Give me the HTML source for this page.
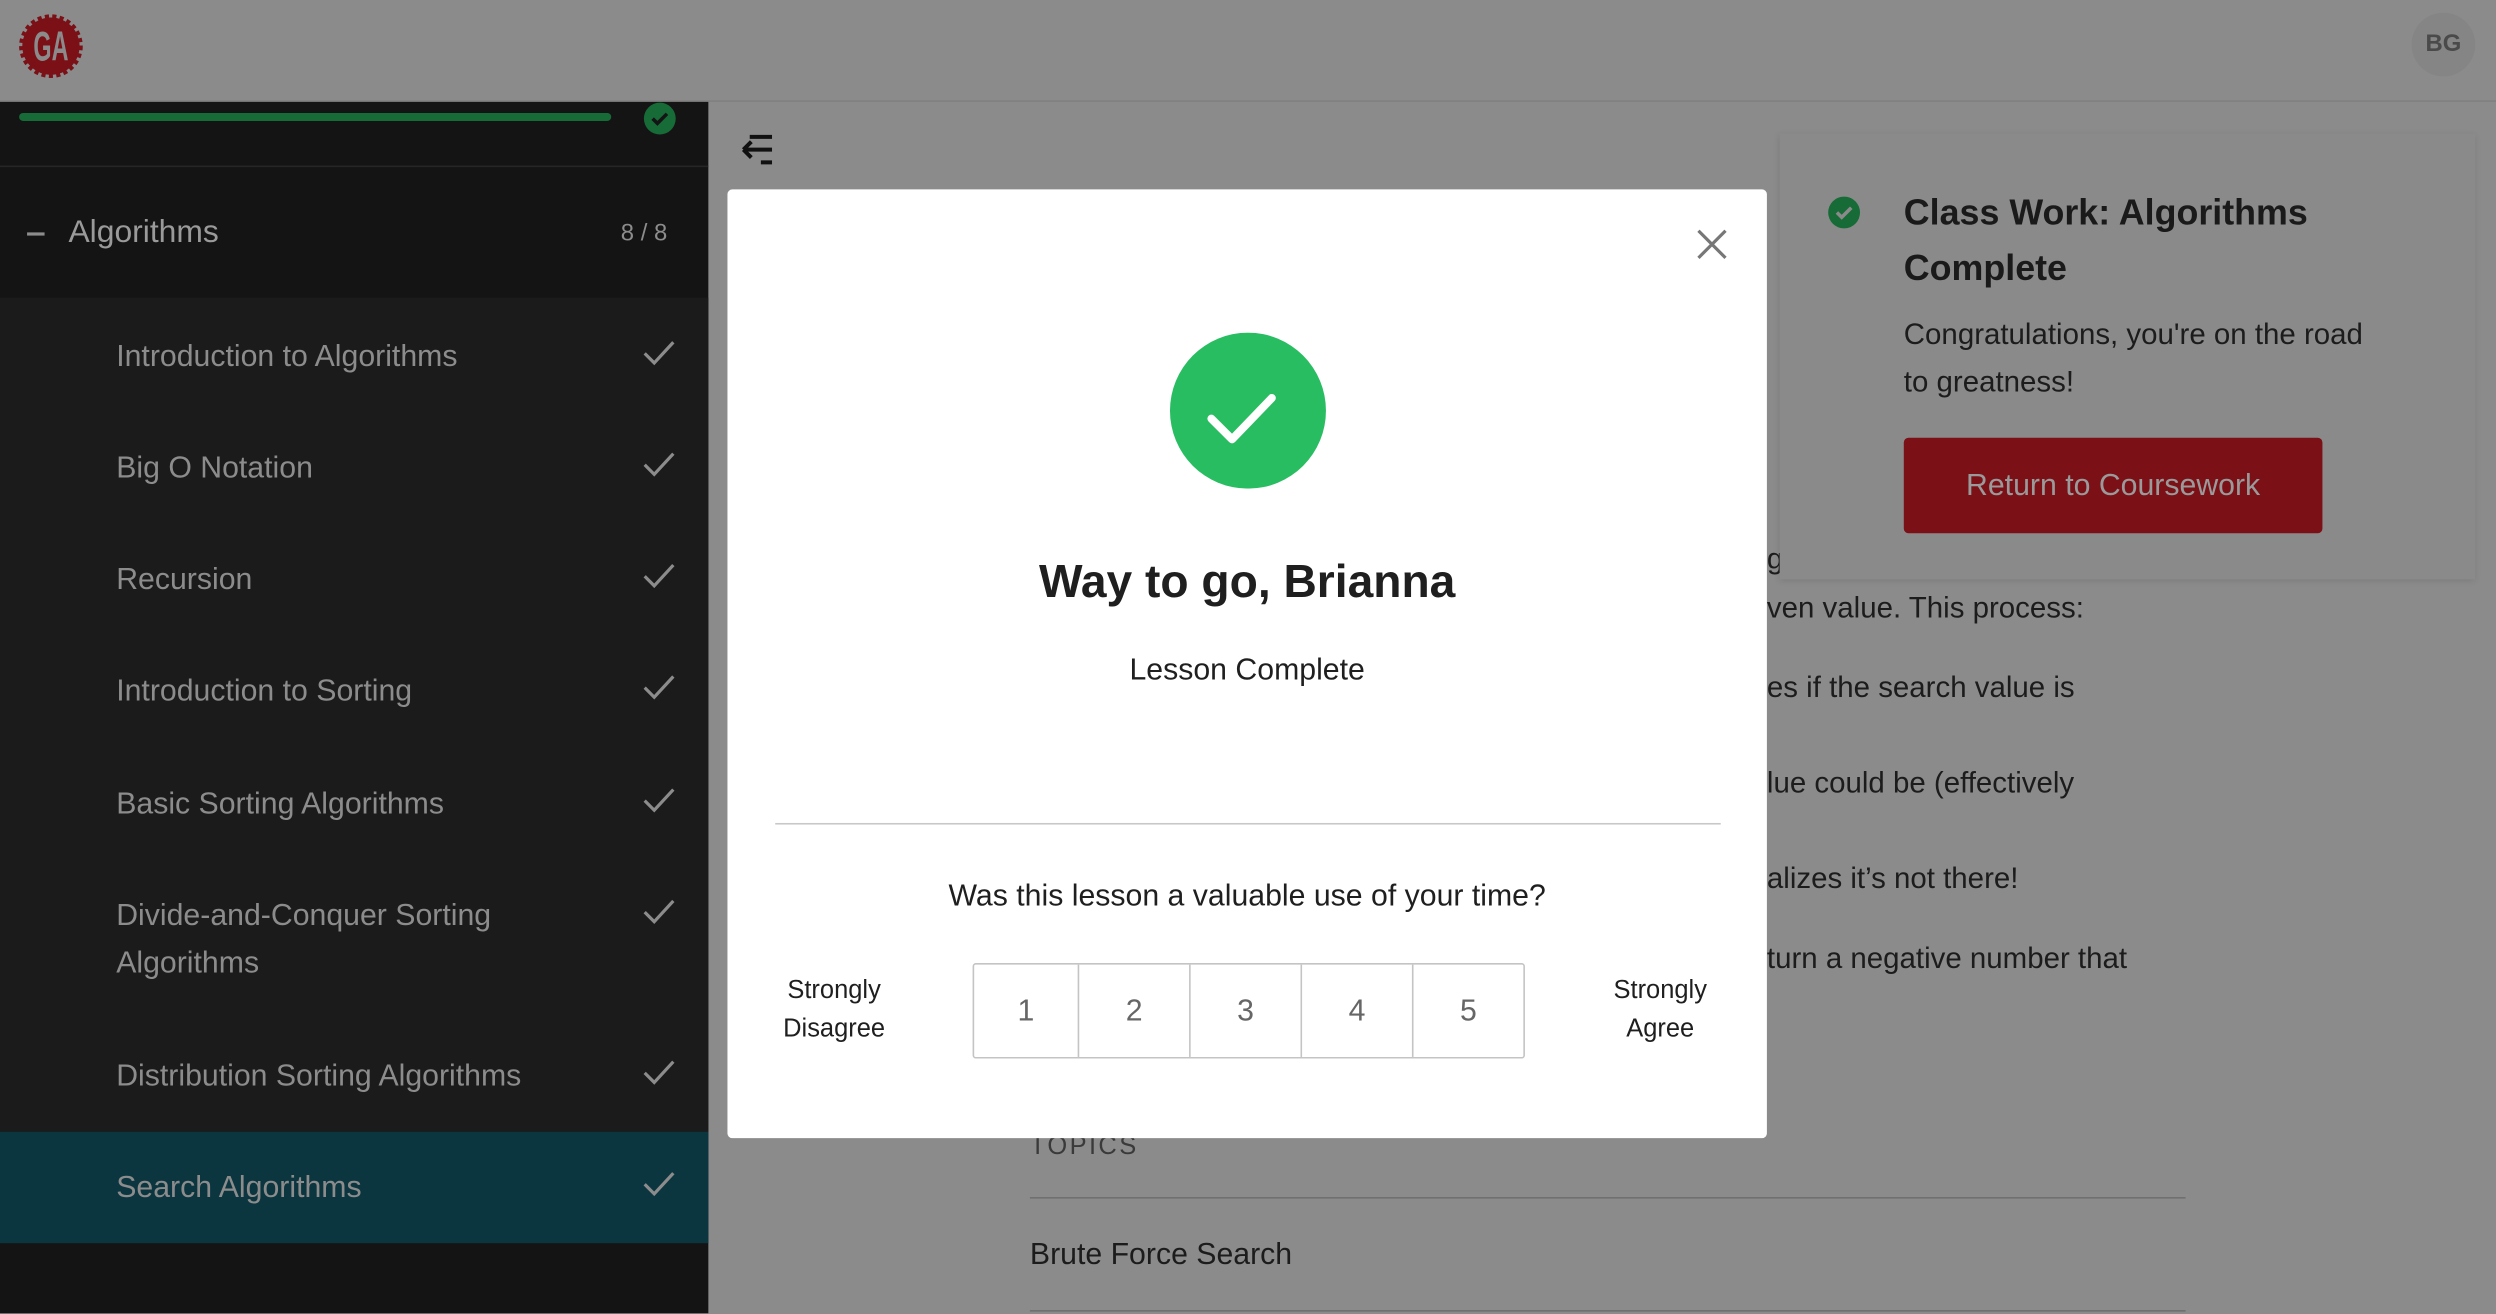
<!DOCTYPE html>
<html><head><meta charset="utf-8"><style>
html,body{margin:0;padding:0;width:2496px;height:1314px;overflow:hidden;background:#8b8b8b;}
#w{position:absolute;left:0;top:0;width:1568px;height:825px;transform:scale(1.5918);transform-origin:0 0;font-family:"Liberation Sans",sans-serif;}
.a{position:absolute;}
.it{position:absolute;left:73px;color:#8c8c8c;font-size:19px;line-height:30px;}
.bg{position:absolute;color:#1c1c1c;font-size:18.5px;left:1110px;white-space:nowrap;}
</style></head><body><div id="w">
<div class="a" style="left:0;top:0;width:1568px;height:63px;background:#8b8b8b;border-bottom:1px solid #808080"></div>
<svg class="a" style="left:11px;top:8px" width="42" height="42" viewBox="0 0 42 42"><circle cx="21" cy="21" r="18" fill="#7b1017" stroke="#7b1017" stroke-width="4" stroke-dasharray="2.5 2"/><text x="21" y="30" text-anchor="middle" font-size="26" font-weight="bold" fill="#8b8b8b" font-family="Liberation Sans Narrow,Liberation Sans,sans-serif" textLength="22" lengthAdjust="spacingAndGlyphs">GA</text></svg>
<div class="a" style="left:1515px;top:8px;width:40px;height:40px;border-radius:50%;background:#858585;color:#4a4a4a;font-weight:bold;font-size:15px;line-height:40px;text-align:center">BG</div>
<div class="a" style="left:0;top:64px;width:445px;height:761px;background:#141414"></div>
<div class="a" style="left:12px;top:71px;width:372px;height:5px;border-radius:3px;background:#176b37"></div>
<svg class="a" style="left:404px;top:64px" width="21" height="21"><circle cx="10.5" cy="10.5" r="10" fill="#176b37"/><path d="M6 10.5l3 3 6-6" stroke="#141414" stroke-width="2.2" fill="none"/></svg>
<div class="a" style="left:0;top:104px;width:445px;height:1px;background:#262626"></div>
<div class="a" style="left:17px;top:146px;width:11px;height:2px;background:#8c8c8c"></div>
<div class="a" style="left:43px;top:135px;color:#9a9a9a;font-size:20px">Algorithms</div>
<div class="a" style="left:390px;top:138px;color:#8c8c8c;font-size:15px">8 / 8</div>
<div class="a" style="left:0;top:187px;width:445px;height:524px;background:#1b1b1b"></div>
<div class="a" style="left:0;top:711px;width:445px;height:70px;background:#0b3640"></div>
<div class="it" style="top:210px">Introduction to Algorithms</div>
<div class="it" style="top:280px">Big O Notation</div>
<div class="it" style="top:350px">Recursion</div>
<div class="it" style="top:420px">Introduction to Sorting</div>
<div class="it" style="top:491px">Basic Sorting Algorithms</div>
<div class="it" style="top:561px">Divide-and-Conquer Sorting<br>Algorithms</div>
<div class="it" style="top:662px">Distribution Sorting Algorithms</div>
<div class="it" style="top:732px">Search Algorithms</div>
<svg class="a" style="left:0;top:0" width="445" height="825"><g stroke="#8c8c8c" stroke-width="2" fill="none"><path d="M405 222l6 6 12-13"/><path d="M405 292l6 6 12-13"/><path d="M405 362l6 6 12-13"/><path d="M405 432l6 6 12-13"/><path d="M405 503l6 6 12-13"/><path d="M405 573l6 6 12-13"/><path d="M405 674l6 6 12-13"/><path d="M405 744l6 6 12-13"/></g></svg>
<svg class="a" style="left:464px;top:84px" width="22" height="20"><g stroke="#111" stroke-width="2.5" fill="none"><path d="M7 2h14M9 10h12M14 18h7M3 10l5-5M3 10l5 5M3 10h6"/></g></svg>
<div class="bg" style="top:340px">g</div>
<div class="bg" style="top:371px">ven value. This process:</div>
<div class="bg" style="top:421px">es if the search value is</div>
<div class="bg" style="top:481px">lue could be (effectively</div>
<div class="bg" style="top:541px">alizes it’s not there!</div>
<div class="bg" style="top:591px">turn a negative number that</div>
<div class="a" style="left:647px;top:712px;color:#3a3a3a;font-size:16px;letter-spacing:1.5px">TOPICS</div>
<div class="a" style="left:647px;top:752px;width:726px;height:1px;background:#6f6f6f"></div>
<div class="a" style="left:647px;top:778px;color:#1c1c1c;font-size:19px">Brute Force Search</div>
<div class="a" style="left:647px;top:823px;width:726px;height:1px;background:#6f6f6f"></div>
<div class="a" style="left:1118px;top:84px;width:437px;height:280px;background:#8a8a8a;box-shadow:0 1px 4px rgba(0,0,0,.12)"></div>
<svg class="a" style="left:1148px;top:123px" width="21" height="21"><circle cx="10.5" cy="10.5" r="10" fill="#176b37"/><path d="M6 10.5l3 3 6-6" stroke="#8a8a8a" stroke-width="2.2" fill="none"/></svg>
<div class="a" style="left:1196px;top:116px;color:#1a1a1a;font-size:22.5px;line-height:35px;font-weight:bold;width:330px">Class Work: Algorithms Complete</div>
<div class="a" style="left:1196px;top:195px;color:#1c1c1c;font-size:18.5px;line-height:30px;width:305px">Congratulations, you're on the road to greatness!</div>
<div class="a" style="left:1196px;top:275px;width:263px;height:60px;border-radius:3px;background:#7b1017;color:#9a9a9a;font-size:19px;line-height:62px;text-align:center">Return to Coursework</div>
<div class="a" style="left:457px;top:119px;width:653px;height:596px;background:#fff;border-radius:3px"></div>
<svg class="a" style="left:1064px;top:142px" width="23" height="23"><path d="M3 3l17 17M20 3L3 20" stroke="#777" stroke-width="2" fill="none"/></svg>
<svg class="a" style="left:735px;top:209px" width="98" height="98"><circle cx="49" cy="49" r="49" fill="#29bd62"/><path d="M26 54l13 13 25-26" stroke="#fff" stroke-width="5" stroke-linecap="round" stroke-linejoin="round" fill="none"/></svg>
<div class="a" style="left:457px;top:350px;width:653px;text-align:center;font-size:29px;font-weight:bold;color:#1f1f1f">Way to go, Brianna</div>
<div class="a" style="left:457px;top:411px;width:653px;text-align:center;font-size:19px;color:#1f1f1f">Lesson Complete</div>
<div class="a" style="left:487px;top:517px;width:594px;height:1px;background:#c8c8c8"></div>
<div class="a" style="left:457px;top:553px;width:653px;text-align:center;font-size:19px;color:#1f1f1f">Was this lesson a valuable use of your time?</div>
<div class="a" style="left:474px;top:611px;width:100px;text-align:center;font-size:16px;line-height:24px;color:#1f1f1f">Strongly<br>Disagree</div>
<div class="a" style="left:993px;top:611px;width:100px;text-align:center;font-size:16px;line-height:24px;color:#1f1f1f">Strongly<br>Agree</div>
<div class="a" style="left:611px;top:605px;height:58px;display:flex;border:1px solid #c4c4c4;border-radius:2px;color:#666;font-size:19px">
<div style="width:65px;line-height:60px;text-align:center;border-right:1px solid #c4c4c4">1</div>
<div style="width:69px;line-height:60px;text-align:center;border-right:1px solid #c4c4c4">2</div>
<div style="width:69px;line-height:60px;text-align:center;border-right:1px solid #c4c4c4">3</div>
<div style="width:69px;line-height:60px;text-align:center;border-right:1px solid #c4c4c4">4</div>
<div style="width:69px;line-height:60px;text-align:center">5</div>
</div>
</div></body></html>
